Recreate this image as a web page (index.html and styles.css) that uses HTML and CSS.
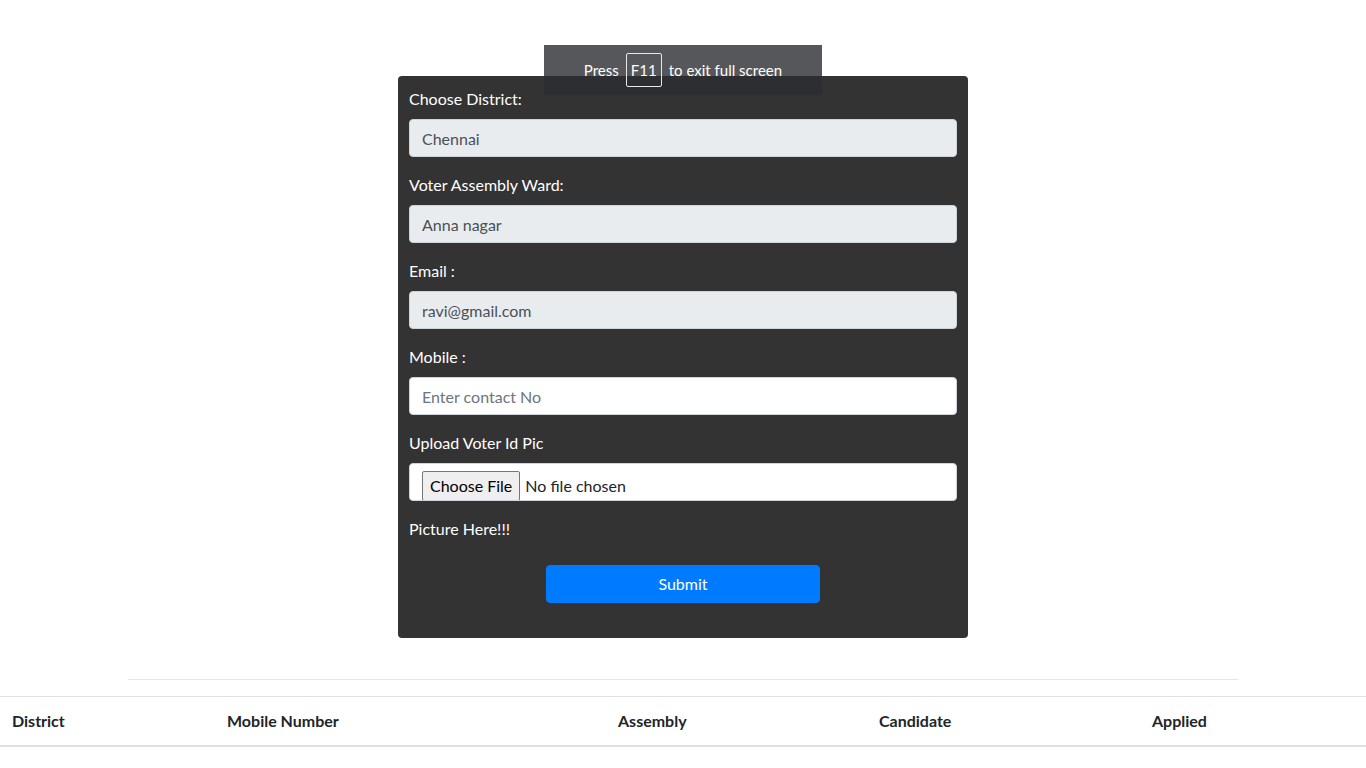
FILE: index.html
```html
<!DOCTYPE html>
<html lang="en">
<head>
<meta charset="utf-8">
<title>Voter Registration</title>
<link rel="stylesheet" href="styles.css">
</head>
<body>
<div class="page">
  <form class="card">
    <div class="group">
      <label class="field-label">Choose District:</label>
      <input class="form-control" type="text" value="Chennai" readonly>
    </div>
    <div class="group">
      <label class="field-label">Voter Assembly Ward:</label>
      <input class="form-control" type="text" value="Anna nagar" readonly>
    </div>
    <div class="group">
      <label class="field-label">Email :</label>
      <input class="form-control" type="text" value="ravi@gmail.com" readonly>
    </div>
    <div class="group">
      <label class="field-label">Mobile :</label>
      <input class="form-control" type="text" placeholder="Enter contact No">
    </div>
    <div class="group">
      <label class="field-label">Upload Voter Id Pic</label>
      <div class="form-control file-box">
        <span class="file-btn">Choose File</span><span class="file-text">No file chosen</span>
      </div>
    </div>
    <div class="picture">Picture Here!!!</div>
    <button class="submit" type="button">Submit</button>
  </form>
  <hr class="divider">
  <table class="table">
    <thead>
      <tr>
        <th class="c1">District</th>
        <th class="c2">Mobile Number</th>
        <th class="c3">Assembly</th>
        <th class="c4">Candidate</th>
        <th class="c5">Applied</th>
      </tr>
    </thead>
  </table>
</div>
<div class="fs-notice">Press <span class="key">F11</span> to exit full screen</div>
</body>
</html>
```
FILE: styles.css
```css
html, body {
  margin: 0;
  padding: 0;
  background: #fff;
}
body {
  font-family: Lato, "Liberation Sans", sans-serif;
  font-size: 16px;
  line-height: 24px;
  color: #212529;
}
.page {
  padding-top: 76px;
}
.card {
  display: block;
  width: 570px;
  box-sizing: border-box;
  margin: 0 auto;
  background: #333333;
  border-radius: 4px;
  padding: 11px 11px 35px;
  color: #fff;
}
.group {
  margin-bottom: 16px;
}
.field-label {
  display: block;
  margin-bottom: 8px;
  line-height: 24px;
}
.form-control {
  display: block;
  width: 100%;
  height: 38px;
  box-sizing: border-box;
  padding: 6px 12px;
  border: 1px solid #ced4da;
  border-radius: 4px;
  font-family: inherit;
  font-size: 16px;
  line-height: 24px;
  color: #495057;
  background: #fff;
  outline: none;
}
.form-control[readonly] {
  background: #e9ecef;
}
.form-control::placeholder {
  color: #6c757d;
  opacity: 1;
}
.file-box {
  display: flex;
  align-items: flex-start;
  padding: 7px 12px 0;
  overflow: hidden;
  color: #212529;
}
.file-btn {
  display: block;
  box-sizing: border-box;
  height: 30px;
  padding: 2px 7px;
  line-height: 24px;
  background: #efefef;
  border: 1px solid #767676;
  border-radius: 2px;
  color: #000;
  margin-right: 5px;
}
.file-text {
  line-height: 30px;
  color: #212529;
}
.picture {
  line-height: 24px;
  margin-bottom: 24px;
}
.submit {
  display: block;
  width: 274px;
  height: 38px;
  margin: 0 auto;
  border: 1px solid #007bff;
  border-radius: 4px;
  background: #007bff;
  color: #fff;
  font-family: inherit;
  font-size: 16px;
  line-height: 24px;
  padding: 6px 12px;
}
.divider {
  width: 1110px;
  margin: 41px auto 16px;
  border: 0;
  border-top: 1px solid rgba(0, 0, 0, 0.1);
  height: 0;
}
.table {
  width: 100%;
  border-collapse: collapse;
  table-layout: fixed;
}
.table th {
  text-align: left;
  font-weight: 700;
  padding: 12px;
  line-height: 24px;
  border-top: 1px solid #dee2e6;
  border-bottom: 2px solid #dee2e6;
  vertical-align: bottom;
}
.c1 { width: 191px; }
.c2 { width: 367px; }
.c3 { width: 237px; }
.c4 { width: 249px; }
.c5 { width: auto; }
.fs-notice {
  position: absolute;
  top: 45px;
  left: 544px;
  width: 278px;
  height: 50px;
  box-sizing: border-box;
  display: flex;
  align-items: center;
  justify-content: center;
  gap: 7px;
  background: rgba(43, 45, 49, 0.8);
  color: #fff;
  font-size: 15px;
  line-height: 20px;
}
.key {
  display: inline-block;
  box-sizing: border-box;
  width: 36px;
  height: 34px;
  line-height: 32px;
  text-align: center;
  border: 1px solid #e8e8e8;
  border-radius: 2px;
}
```
